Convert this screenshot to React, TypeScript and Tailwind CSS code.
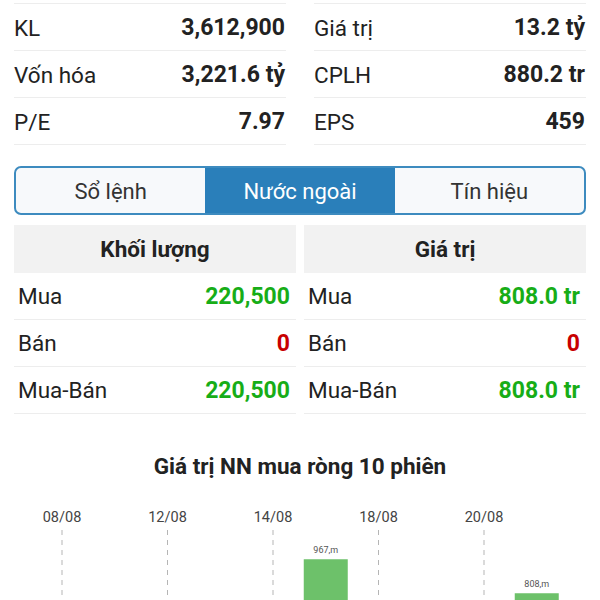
const stats = [
  [
    { label: "KL", value: "3,612,900" },
    { label: "Vốn hóa", value: "3,221.6 tỷ" },
    { label: "P/E", value: "7.97" },
  ],
  [
    { label: "Giá trị", value: "13.2 tỷ" },
    { label: "CPLH", value: "880.2 tr" },
    { label: "EPS", value: "459" },
  ],
];

const foreign = [
  {
    title: "Khối lượng",
    rows: [
      { label: "Mua", value: "220,500", tone: "up" },
      { label: "Bán", value: "0", tone: "down" },
      { label: "Mua-Bán", value: "220,500", tone: "up" },
    ],
  },
  {
    title: "Giá trị",
    rows: [
      { label: "Mua", value: "808.0 tr", tone: "up" },
      { label: "Bán", value: "0", tone: "down" },
      { label: "Mua-Bán", value: "808.0 tr", tone: "up" },
    ],
  },
];

const tabs = ["Sổ lệnh", "Nước ngoài", "Tín hiệu"];

// 10 sessions, one slot each; a date is printed on every other slot
const sessions = [
  { date: "08/08", value: 0 },
  { date: "", value: 0 },
  { date: "12/08", value: 0 },
  { date: "", value: 0 },
  { date: "14/08", value: 0 },
  { date: "", value: 967, label: "967,m" },
  { date: "18/08", value: 0 },
  { date: "", value: 0 },
  { date: "20/08", value: 0 },
  { date: "", value: 808, label: "808,m" },
];

function NetBuyChart() {
  const slot = 52.75;
  const x0 = 62;
  // baseline sits below the visible area
  const base = 766;
  const scale = 0.2138;
  return (
    <svg width="600" height="112" viewBox="0 488 600 112" className="block">
      {sessions.map((s, i) => {
        const cx = x0 + i * slot;
        if (!s.date) return null;
        return (
          <g key={i}>
            <text
              x={cx}
              y={522}
              textAnchor="middle"
              fontSize="14.5"
              fill="#444"
              fontFamily="Roboto, sans-serif"
            >
              {s.date}
            </text>
            <line
              x1={cx}
              x2={cx}
              y1={530}
              y2={600}
              stroke="#b5b5b5"
              strokeWidth="1"
              strokeDasharray="5 5"
            />
          </g>
        );
      })}
      {sessions.map((s, i) => {
        if (!s.value) return null;
        const cx = x0 + i * slot;
        const h = s.value * scale;
        return (
          <g key={`b${i}`}>
            <rect x={cx - 22} y={base - h} width={44} height={h} fill="#6dc16a" />
            <text
              x={cx}
              y={base - h - 6}
              textAnchor="middle"
              fontSize="9"
              fill="#555"
              fontFamily="Roboto, sans-serif"
            >
              {s.label}
            </text>
          </g>
        );
      })}
    </svg>
  );
}

export default function App() {
  return (
    <div className="h-[600px] w-[600px] overflow-hidden bg-white font-['Roboto',sans-serif] text-[#222]">
      {/* Stock summary */}
      <div className="grid grid-cols-2 gap-x-[28px] px-[14px] pt-[3px]">
        {stats.map((col, ci) => (
          <div key={ci} className="border-t border-[#ededed]">
            {col.map((row) => (
              <div
                key={row.label}
                className="flex h-[47px] items-center justify-between border-b border-[#ededed] pt-[3px] pr-[1px]"
              >
                <span className="text-[22.5px]">{row.label}</span>
                <span className="text-[23px] font-bold">{row.value}</span>
              </div>
            ))}
          </div>
        ))}
      </div>

      {/* Tabs */}
      <div className="mx-[14px] mt-[21px] flex h-[49px] overflow-hidden rounded-[7px] border-2 border-[#3d8bbf] bg-[#f7f9fb] text-[22px]">
        {tabs.map((t, i) => (
          <div
            key={t}
            className={
              i === 1
                ? "flex flex-1 items-center justify-center bg-[#2a7fba] pt-[2px] text-white"
                : "flex flex-1 items-center justify-center pt-[2px] text-[#333]"
            }
          >
            {t}
          </div>
        ))}
      </div>

      {/* Foreign trading */}
      <div className="mt-[10px] grid grid-cols-2 gap-x-[8px] px-[14px]">
        {foreign.map((block) => (
          <div key={block.title}>
            <div className="flex h-[48px] items-center justify-center bg-[#f2f2f2] pt-[2px] text-[22.5px] font-bold">
              {block.title}
            </div>
            {block.rows.map((row) => (
              <div
                key={row.label}
                className="flex h-[47px] items-center justify-between border-b border-[#ededed] pt-[2px] pr-[6px] pl-[4px]"
              >
                <span className="text-[22.5px]">{row.label}</span>
                <span
                  className={
                    row.tone === "up"
                      ? "text-[23px] font-bold text-[#17ad17]"
                      : "text-[23px] font-bold text-[#c80000]"
                  }
                >
                  {row.value}
                </span>
              </div>
            ))}
          </div>
        ))}
      </div>

      {/* Chart */}
      <div className="mt-[37px] text-center text-[22.5px] font-bold leading-[30px]">
        Giá trị NN mua ròng 10 phiên
      </div>
      <div className="mt-[7px]">
        <NetBuyChart />
      </div>
    </div>
  );
}
